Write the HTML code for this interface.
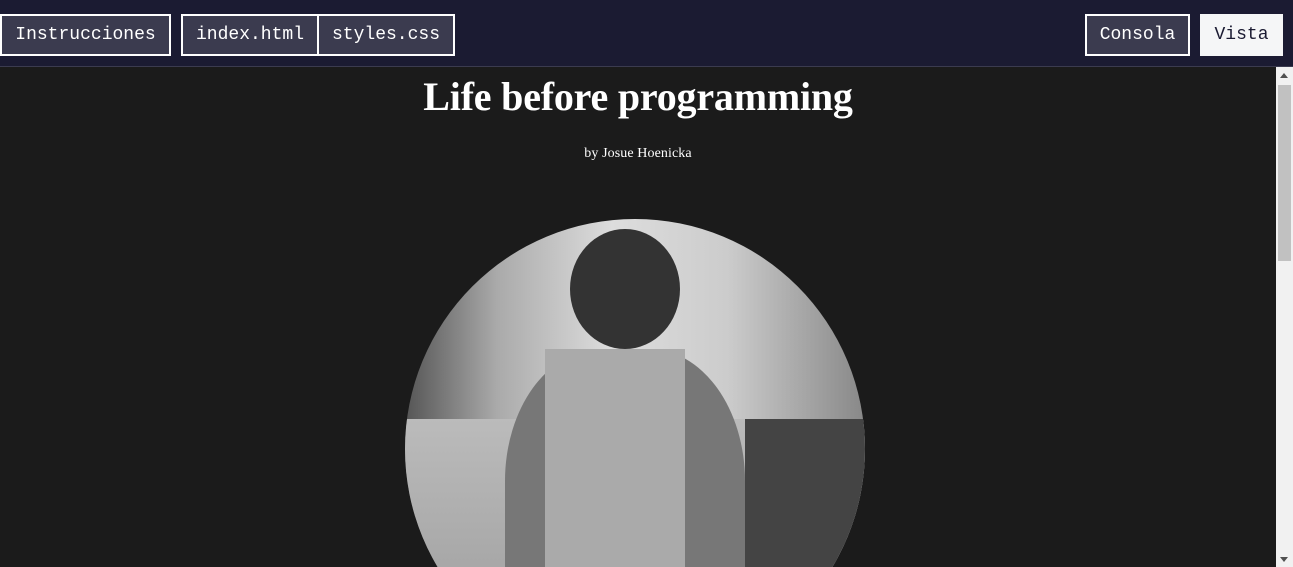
<!DOCTYPE html>
<html><head><style>
html,body{margin:0;width:1293px;height:567px;overflow:hidden}
body{background:#1b1b1b;font-family:"Liberation Mono",monospace;position:relative}
.hdr{position:absolute;left:0;top:0;width:1293px;height:66px;background:#1b1b32;border-bottom:1px solid #3b3b4f}
.b{position:absolute;top:14px;height:42px;box-sizing:border-box;border:2px solid #fff;background:#3b3b4f;color:#fff;font-size:18px;line-height:38px;text-align:center}
.main{position:absolute;left:0;top:67px;width:1276px;height:500px;overflow:hidden;background:#1b1b1b;color:#fff;font-family:"Liberation Serif",serif;text-align:center}
h1{margin:0;position:absolute;top:6px;width:100%;font-size:40px;letter-spacing:-0.2px}
.by{position:absolute;top:79px;width:100%;font-size:14px;letter-spacing:0.1px}
.ph{position:absolute;left:405px;top:152px;width:460px;height:460px;border-radius:50%;overflow:hidden;background:linear-gradient(90deg,#555 0%,#aaa 20%,#ddd 45%,#ccc 70%,#888 100%)}
.sb{position:absolute;left:1276px;top:67px;width:17px;height:500px;background:#f1f1f1}
</style></head><body>
<div class="hdr">
<div class="b" style="left:0;width:171px">Instrucciones</div>
<div class="b" style="left:181px;width:138px">index.html</div>
<div class="b" style="left:317px;width:138px">styles.css</div>
<div class="b" style="left:1085px;width:105px">Consola</div>
<div class="b" style="left:1200px;width:83px;background:#f5f6f7;border-color:#f5f6f7;color:#1b1b32">Vista</div>
</div>
<div class="main">
<h1>Life before programming</h1>
<div class="by">by Josue Hoenicka</div>
<div class="ph">
<div style="position:absolute;left:0;top:200px;width:460px;height:260px;background:linear-gradient(180deg,#bbb,#999)"></div>
<div style="position:absolute;left:340px;top:200px;width:120px;height:200px;background:#444"></div>
<div style="position:absolute;left:165px;top:10px;width:110px;height:120px;border-radius:50%;background:#333"></div>
<div style="position:absolute;left:100px;top:130px;width:240px;height:330px;border-radius:40% 40% 0 0;background:#777"></div>
<div style="position:absolute;left:140px;top:130px;width:140px;height:330px;background:#aaa"></div>
</div>
</div>
<div class="sb"><div style="position:absolute;left:2px;top:18px;width:13px;height:176px;background:#c1c1c1"></div>
<div style="position:absolute;left:4px;top:6px;border:4px solid transparent;border-bottom:5px solid #505050;border-top:0"></div>
<div style="position:absolute;left:4px;top:490px;border:4px solid transparent;border-top:5px solid #505050;border-bottom:0"></div></div>
</body></html>
